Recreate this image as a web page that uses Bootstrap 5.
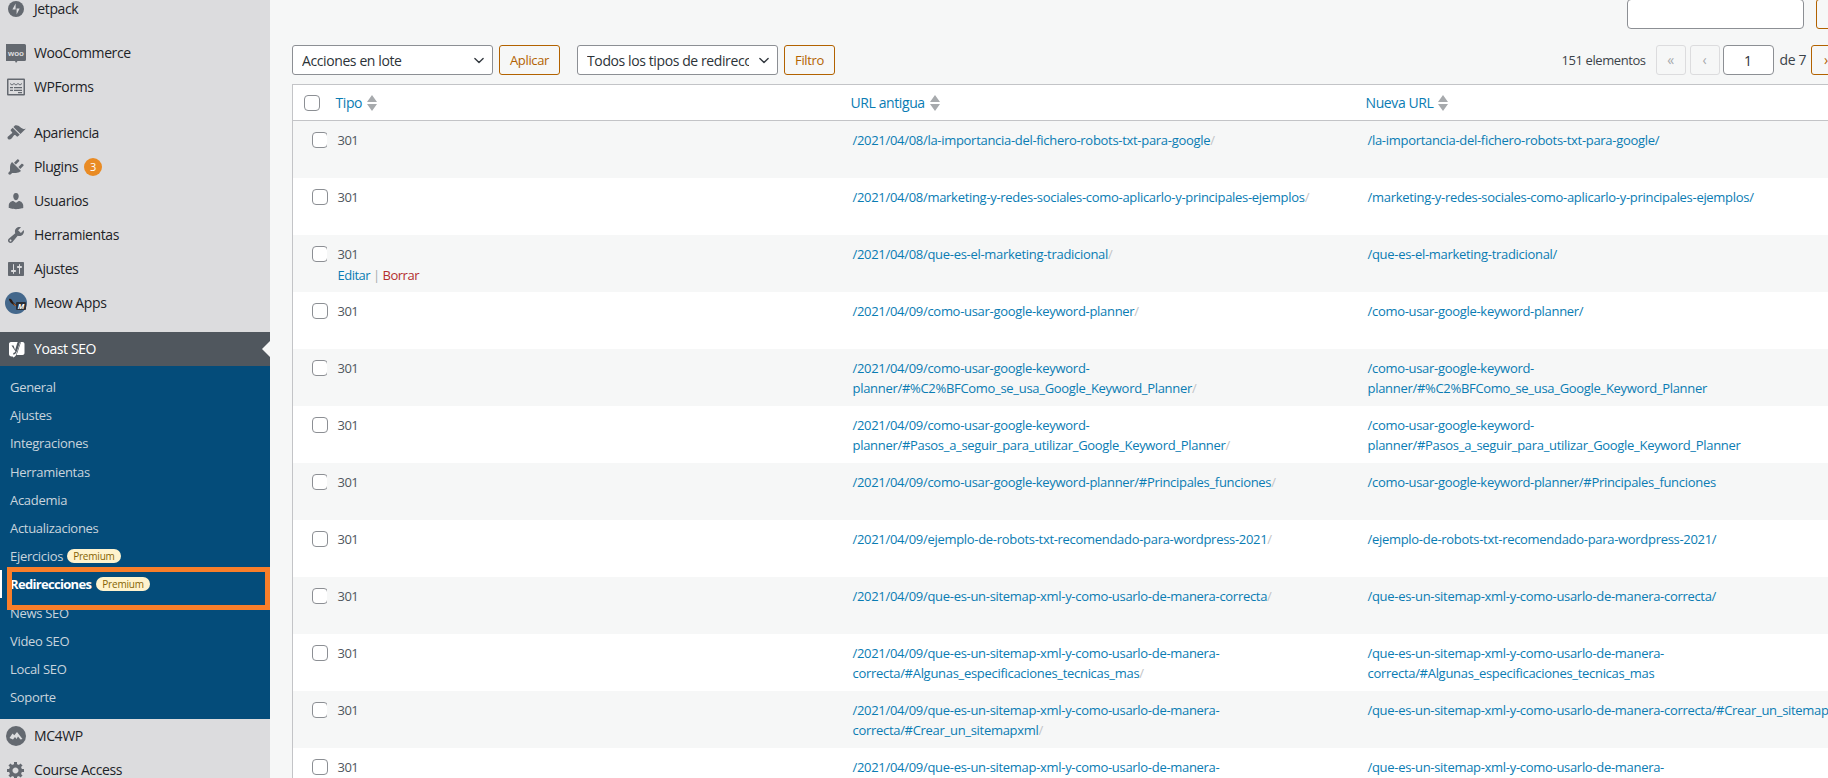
<!DOCTYPE html>
<html lang="es">
<head>
<meta charset="utf-8">
<title>Redirecciones</title>
<link href="https://cdn.jsdelivr.net/npm/bootstrap@5.3.0/dist/css/bootstrap.min.css" rel="stylesheet">
<style>
html,body{height:778px;overflow:hidden;background:#f6f7f7}
body{font-family:"Open Sans","Noto Sans",sans-serif;font-size:13px;letter-spacing:-.42px;color:#3c434a;line-height:20px}
.wp-shell{height:778px;overflow:hidden}
.wp-side{width:270px;flex:none;background:#dcdcde;height:778px;overflow:hidden;position:relative;font-size:14px;letter-spacing:-.4px}
.wp-list{margin:-8px 0 0}
.wp-item{height:34px;color:#1d2327;gap:8px;padding-left:6px}
.wp-ico{width:20px;height:20px;flex:none;fill:#646970}
.wp-ico-meow{width:22px;height:22px;margin:0 -1px}
.wp-sep{height:10px}
.wp-sep2{height:12px}
.wp-count{width:18px;height:18px;border-radius:50%;background:#e98b24;color:#fff;font-size:11px;letter-spacing:0;margin-left:-2px}
.wp-yoast{background:#50575e;color:#fff;position:relative}
.wp-yoast::after{content:"";position:absolute;right:0;top:9px;border:8px solid transparent;border-right-color:#f6f7f7;border-left:0}
.wp-sub{background:#044c7a;padding:7px 0 8px;color:#c9d4dd;font-size:13px;letter-spacing:-.3px}
.wp-sub>div{height:28.2px;padding-left:10px;gap:4px}
.wp-sub .wp-on{color:#fff;font-weight:700;letter-spacing:-.68px}
.wp-prem{background:#fff3cd;color:#856404;font-size:10px;font-weight:400;letter-spacing:-.2px;line-height:14px;border-radius:8px;padding:0 6px;margin-left:0}
.wp-on .wp-prem{margin-left:1px}
.wp-bar{position:absolute;left:0;top:570px;width:2px;height:28px;background:#fff}
.wp-mark{position:absolute;left:7px;top:567px;width:263px;height:43px;border:5px solid #f97e2a}
.wp-main{flex:none;width:1583px;margin-left:22px}
.wp-search{margin-top:-1px;height:30px;margin-bottom:16px;gap:12px}
.wp-input{width:177px;height:30px;border:1px solid #8c8f94;border-radius:4px;background:#fff}
.wp-btn.btn{height:30px;padding:0 10px;font-size:13px;letter-spacing:-.35px;line-height:28px;color:#b26200;border:1px solid #b26200;border-radius:3px;background:#f6f7f7;margin-left:6px}
.wp-search .wp-btn.btn{width:59px;margin-left:0}
.wp-nav{height:30px;margin-bottom:9px}
.wp-sel.form-select{width:201px;height:30px;padding:0 28px 0 9px;font-size:14px;letter-spacing:-.4px;color:#2c3338;border:1px solid #8c8f94;border-radius:3px;background-position:right 6px center;background-size:14px 11px;font-family:inherit}
.wp-sel2.form-select{margin-left:17px}
.wp-total{margin-right:10px}
.wp-of{margin-right:5px;font-size:14px}
.wp-page.btn{width:30px;height:30px;padding:0;font-size:14px;line-height:26px;color:#a7aaad;background:#f6f7f7;border:1px solid #dcdcde;border-radius:3px;opacity:1}
.wp-page-on.btn{color:#b26200;border-color:#b26200}
.wp-num.form-control{width:51px;height:30px;padding:0;text-align:center;font-size:14px;color:#2c3338;border:1px solid #8c8f94;border-radius:4px;margin:0 6px 0 3px;font-family:inherit}
.wp-table.table{table-layout:fixed;width:1583px;margin:0;border:1px solid #c3c4c7;border-bottom:0;background:#fff;font-size:13px}
.wp-col1{width:34px}.wp-col2,.wp-col3{width:515px}.wp-col4{width:519px}
.wp-table.table>:not(caption)>*>*{padding:8px 10px;background:transparent;color:#50575e;box-shadow:none;border:0;vertical-align:top;line-height:20px;white-space:nowrap;overflow:visible}
.wp-table.table>thead>tr>th{height:36px;padding:7px 9px;font-weight:400;font-size:14px;letter-spacing:-.4px;color:#0a7cb3;border-bottom:1px solid #c3c4c7;vertical-align:middle}
.wp-table.table>tbody>tr>td{height:57px;padding:9px 10px 8px 10px}
.wp-table.table>tbody>tr:nth-child(odd)>td{background:#f6f7f7}
.wp-table.table>thead>tr>th.wp-c{padding:0 0 0 11px}
.wp-table.table>tbody>tr>td.wp-c{padding:11px 0 0 19px}
.wp-table.table>tbody>tr>td.wp-t{padding-left:11px;letter-spacing:-.5px}
.wp-table.table>tbody>tr>td.wp-u{padding-left:11px;letter-spacing:-.3px}
.wp-table a{color:#0a7cb3;text-decoration:none}
.wp-table a.wp-del{color:#b32d2e}
.wp-table .wp-slash{color:#c3c4c7}
.wp-check.form-check-input{width:16px;height:16px;margin:0;border:1px solid #8c8f94;border-radius:4px;display:block;background-color:#fff}
.wp-sort{width:10px;height:16px;fill:#a7aaad;margin-left:5px;vertical-align:-3px}
.wp-act{color:#a7aaad;font-size:13px}
.wp-rowact{margin:1px 0 -1px}
</style>
</head>
<body>
<div class="wp-shell d-flex">
<aside class="wp-side">
  <div class="wp-list">
    <div class="wp-item d-flex align-items-center"><svg class="wp-ico" viewBox="0 0 20 20"><circle cx="10" cy="10" r="8"/><path fill="#dcdcde" d="M9.6 4.500v6H6.400zM10.600 15.500v-6h3.100z"/></svg>Jetpack</div>
    <div class="wp-sep"></div>
    <div class="wp-item d-flex align-items-center"><svg class="wp-ico" viewBox="0 0 20 20"><path d="M1.500 1h17a1.500 1.500 0 0 1 1.500 1.500v14a1.500 1.500 0 0 1-1.500 1.500h-7l-1.500 2-1-2h-8.500a1.500 1.500 0 0 1-1.500-1.500v-14a1.500 1.500 0 0 1 1.500-1.500z"/><text x="10" y="12.500" font-size="8" font-weight="700" fill="#dcdcde" text-anchor="middle" font-family="'Liberation Sans',sans-serif" letter-spacing="0">woo</text></svg>WooCommerce</div>
    <div class="wp-item d-flex align-items-center"><svg class="wp-ico" viewBox="0 0 20 20"><path fill-rule="evenodd" d="M2 1.500h16a1 1 0 0 1 1 1v15a1 1 0 0 1-1 1h-16a1 1 0 0 1-1-1v-15a1 1 0 0 1 1-1zM2.500 3v14h15v-14z"/><path d="M4 6l2 1.500 2-1.500 2 1.500 2-1.500 2 1.500 2-1.500v1l-2 1.500-2-1.500-2 1.500-2-1.500-2 1.500-2-1.500zM4 10h3v1.200h-3zM8 10h8v1.200h-8zM4 12.800h3v1.200h-3zM8 12.800h8v1.200h-8zM12 15h4v1.200h-4z"/></svg>WPForms</div>
    <div class="wp-sep2"></div>
    <div class="wp-item d-flex align-items-center"><svg class="wp-ico" viewBox="0 0 20 20"><path d="M14.480 11.060L7.410 3.990l1.500-1.500c.5-.56 2.300-.47 3.510.32 1.210.8 1.430 1.280 2.910 2.100 1.180.64 2.450 1.260 4.450.85zm-.71.71L6.700 4.700 4.930 6.470c-.39.39-.39 1.020 0 1.410l1.060 1.060c.39.39.39 1.030 0 1.420-.6.6-1.430 1.110-2.210 1.690-.35.26-.7.53-1.010.84C1.430 13.230 1 14.890 2.070 15.960c.97.97 2.390.67 3.500-.43.3-.31.57-.66.83-1.010.58-.78 1.100-1.610 1.700-2.210.39-.39 1.020-.39 1.410 0l1.060 1.060c.39.39 1.020.39 1.410 0z"/></svg>Apariencia</div>
    <div class="wp-item d-flex align-items-center"><svg class="wp-ico" viewBox="0 0 20 20"><path d="M13.110 4.360L9.870 7.600 8 5.730l3.240-3.240c.35-.34 1.050-.2 1.560.32.52.51.66 1.210.31 1.550zm-8 1.770l.91-1.120 9.010 9.010-1.190.84c-.71.71-2.630 1.160-3.820 1.160H6.140L4.900 17.260c-.59.59-1.540.59-2.120 0-.59-.58-.59-1.530 0-2.120l1.240-1.240v-3.880c0-1.130.4-3.190 1.090-3.890zm7.260 3.970l3.240-3.240c.34-.35 1.040-.21 1.550.31.52.51.66 1.210.31 1.550l-3.240 3.250z"/></svg><span>Plugins</span><span class="wp-count d-inline-flex align-items-center justify-content-center">3</span></div>
    <div class="wp-item d-flex align-items-center"><svg class="wp-ico" viewBox="0 0 20 20"><path d="M10 9.250c-2.270 0-2.730-3.440-2.730-3.440C7 4.020 7.820 2 9.970 2c2.160 0 2.980 2.020 2.710 3.810 0 0-.41 3.440-2.680 3.440zm0 2.570L12.720 10c2.390 0 4.520 2.330 4.520 4.530v2.490s-3.650 1.130-7.240 1.130c-3.650 0-7.240-1.130-7.240-1.130v-2.490c0-2.250 1.940-4.480 4.470-4.480z"/></svg>Usuarios</div>
    <div class="wp-item d-flex align-items-center"><svg class="wp-ico" viewBox="0 0 20 20"><path d="M16.680 9.770c-1.340 1.340-3.300 1.670-4.950.99l-5.410 6.520c-.99.99-2.590.99-3.580 0s-.99-2.590 0-3.570l6.520-5.420c-.68-1.650-.35-3.610.99-4.950 1.280-1.280 3.120-1.620 4.720-1.060l-2.890 2.890 2.820 2.820 2.860-2.870c.53 1.580.18 3.390-1.080 4.650zM3.810 16.210c.4.39 1.040.39 1.430 0 .4-.4.4-1.040 0-1.430-.39-.4-1.030-.4-1.430 0-.39.39-.39 1.030 0 1.430z"/></svg>Herramientas</div>
    <div class="wp-item d-flex align-items-center"><svg class="wp-ico" viewBox="0 0 20 20"><path d="M18 16V4c0-.55-.45-1-1-1H3c-.55 0-1 .45-1 1v12c0 .55.45 1 1 1h14c.55 0 1-.45 1-1zM8 11h1c.55 0 1 .45 1 1s-.45 1-1 1H8v1.500c0 .28-.22.5-.5.5s-.5-.22-.5-.5V13H6c-.55 0-1-.45-1-1s.45-1 1-1h1V5.500c0-.28.22-.5.5-.5s.5.22.5.5V11zm5-2h-1c-.55 0-1-.45-1-1s.45-1 1-1h1V5.500c0-.28.22-.5.5-.5s.5.22.5.5V7h1c.55 0 1 .45 1 1s-.45 1-1 1h-1v5.500c0 .28-.22.5-.5.5s-.5-.22-.5-.5V9z"/></svg>Ajustes</div>
    <div class="wp-item d-flex align-items-center"><svg class="wp-ico wp-ico-meow" viewBox="0 0 22 22"><circle cx="11" cy="11" r="11" fill="#44688c"/><path d="M4 7c2-1 3 1 4 3l3 3-1 1-4-3c-1-1-2-3-2-4z" fill="#2b1a12"/><path d="M8 11l3 2.500-1 .8z" fill="#d8742a"/><rect x="11" y="10" width="10" height="8" rx="1" fill="#2a2f36"/><text x="16" y="16.500" font-size="7.500" font-style="italic" font-weight="700" fill="#fff" text-anchor="middle" letter-spacing="0">M</text></svg>Meow Apps</div>
    <div class="wp-sep2"></div>
    <div class="wp-item wp-yoast d-flex align-items-center"><svg class="wp-ico" viewBox="0 0 20 20"><path fill="#fff" d="M3 3h11.500l-1.500 4-2.800 8.500c-.4 1.400-1.300 2.500-3 3l-.4-1h-1.300c-1.500 0-2.500-1-2.500-2.500v-10c0-1 .5-2 2-2z"/><path fill="#fff" d="M15 3h1.500c1.200 0 2 .8 2 2v9c0 1.300-.8 2-2 2h-6l1-2.500z"/><path fill="#50575e" d="M5.500 6.500h2l1.600 4.500 2-6.500 1-2.500h2.300l-3.400 10c-.7 2-1.700 3.300-3.700 3.700v-1.700c1-.2 1.800-.8 2.100-1.800z"/></svg>Yoast SEO</div>
    <div class="wp-sub">
      <div class="d-flex align-items-center">General</div>
      <div class="d-flex align-items-center">Ajustes</div>
      <div class="d-flex align-items-center">Integraciones</div>
      <div class="d-flex align-items-center">Herramientas</div>
      <div class="d-flex align-items-center">Academia</div>
      <div class="d-flex align-items-center">Actualizaciones</div>
      <div class="d-flex align-items-center">Ejercicios <span class="wp-prem">Premium</span></div>
      <div class="d-flex align-items-center wp-on">Redirecciones <span class="wp-prem">Premium</span></div>
      <div class="d-flex align-items-center">News SEO</div>
      <div class="d-flex align-items-center">Video SEO</div>
      <div class="d-flex align-items-center">Local SEO</div>
      <div class="d-flex align-items-center">Soporte</div>
    </div>
    <div class="wp-item d-flex align-items-center"><svg class="wp-ico" viewBox="0 0 20 20"><circle cx="10" cy="10" r="10"/><path fill="#dcdcde" d="M3.500 12l3-4.500 1.800 1.800L11 6l5.500 7-2 .5-2.500-3-1.500 2.500-1.500-2-2 2.500z"/></svg>MC4WP</div>
    <div class="wp-item d-flex align-items-center"><svg class="wp-ico" viewBox="0 0 20 20"><path d="M18 12h-2.180c-.17.7-.44 1.350-.81 1.930l1.540 1.540-2.100 2.100-1.540-1.540c-.58.36-1.230.63-1.910.79V19H8v-2.180c-.68-.16-1.330-.43-1.910-.79l-1.540 1.540-2.120-2.120 1.540-1.540c-.36-.58-.63-1.230-.79-1.910H1V9.030h2.170c.16-.7.44-1.350.8-1.940L2.430 5.550l2.100-2.100 1.540 1.540c.58-.37 1.240-.64 1.930-.81V2h3v2.180c.68.16 1.330.43 1.910.79l1.540-1.540 2.120 2.120-1.540 1.540c.36.59.64 1.240.8 1.940H18V12zm-8.500 1.500c1.660 0 3-1.340 3-3s-1.340-3-3-3-3 1.340-3 3 1.340 3 3 3z"/></svg>Course Access</div>
  </div>
  <div class="wp-bar"></div>
  <div class="wp-mark"></div>
</aside>
<main class="wp-main">
  <div class="wp-search d-flex justify-content-end">
    <div class="wp-input"></div>
    <button class="btn wp-btn" type="button"></button>
  </div>
  <div class="wp-nav d-flex justify-content-between align-items-center">
    <div class="d-flex align-items-center">
      <select class="form-select wp-sel"><option>Acciones en lote</option></select>
      <button class="btn wp-btn" type="button">Aplicar</button>
      <select class="form-select wp-sel wp-sel2"><option>Todos los tipos de redirección</option></select>
      <button class="btn wp-btn" type="button">Filtro</button>
    </div>
    <div class="d-flex align-items-center">
      <span class="wp-total">151 elementos</span>
      <button class="btn wp-page me-1" disabled type="button">«</button>
      <button class="btn wp-page" disabled type="button">‹</button>
      <input class="form-control wp-num" value="1" aria-label="Página">
      <span class="wp-of">de 7</span>
      <button class="btn wp-page wp-page-on me-1" type="button">›</button>
      <button class="btn wp-page wp-page-on" type="button">»</button>
    </div>
  </div>
  <table class="table wp-table">
    <colgroup><col class="wp-col1"><col class="wp-col2"><col class="wp-col3"><col class="wp-col4"></colgroup>
    <thead><tr>
      <th class="wp-c"><input class="form-check-input wp-check" type="checkbox" aria-label="Todos"></th>
      <th>Tipo<svg class="wp-sort" viewBox="0 0 10 16"><path d="M5 0l5 7H0zM5 16L0 9h10z"/></svg></th>
      <th>URL antigua<svg class="wp-sort" viewBox="0 0 10 16"><path d="M5 0l5 7H0zM5 16L0 9h10z"/></svg></th>
      <th>Nueva URL<svg class="wp-sort" viewBox="0 0 10 16"><path d="M5 0l5 7H0zM5 16L0 9h10z"/></svg></th>
    </tr></thead>
    <tbody>
      <tr><td class="wp-c"><input class="form-check-input wp-check" type="checkbox" aria-label="Fila"></td><td class="wp-t">301</td><td class="wp-u"><a href="#">/2021/04/08/la-importancia-del-fichero-robots-txt-para-google<span class="wp-slash">/</span></a></td><td class="wp-u"><a href="#">/la-importancia-del-fichero-robots-txt-para-google/</a></td></tr>
      <tr><td class="wp-c"><input class="form-check-input wp-check" type="checkbox" aria-label="Fila"></td><td class="wp-t">301</td><td class="wp-u"><a href="#">/2021/04/08/marketing-y-redes-sociales-como-aplicarlo-y-principales-ejemplos<span class="wp-slash">/</span></a></td><td class="wp-u"><a href="#">/marketing-y-redes-sociales-como-aplicarlo-y-principales-ejemplos/</a></td></tr>
      <tr><td class="wp-c"><input class="form-check-input wp-check" type="checkbox" aria-label="Fila"></td><td class="wp-t">301<div class="wp-rowact"><a href="#">Editar</a> <span class="wp-act">|</span> <a class="wp-del" href="#">Borrar</a></div></td><td class="wp-u"><a href="#">/2021/04/08/que-es-el-marketing-tradicional<span class="wp-slash">/</span></a></td><td class="wp-u"><a href="#">/que-es-el-marketing-tradicional/</a></td></tr>
      <tr><td class="wp-c"><input class="form-check-input wp-check" type="checkbox" aria-label="Fila"></td><td class="wp-t">301</td><td class="wp-u"><a href="#">/2021/04/09/como-usar-google-keyword-planner<span class="wp-slash">/</span></a></td><td class="wp-u"><a href="#">/como-usar-google-keyword-planner/</a></td></tr>
      <tr><td class="wp-c"><input class="form-check-input wp-check" type="checkbox" aria-label="Fila"></td><td class="wp-t">301</td><td class="wp-u"><a href="#">/2021/04/09/como-usar-google-keyword-<br>planner/#%C2%BFComo_se_usa_Google_Keyword_Planner<span class="wp-slash">/</span></a></td><td class="wp-u"><a href="#">/como-usar-google-keyword-<br>planner/#%C2%BFComo_se_usa_Google_Keyword_Planner</a></td></tr>
      <tr><td class="wp-c"><input class="form-check-input wp-check" type="checkbox" aria-label="Fila"></td><td class="wp-t">301</td><td class="wp-u"><a href="#">/2021/04/09/como-usar-google-keyword-<br>planner/#Pasos_a_seguir_para_utilizar_Google_Keyword_Planner<span class="wp-slash">/</span></a></td><td class="wp-u"><a href="#">/como-usar-google-keyword-<br>planner/#Pasos_a_seguir_para_utilizar_Google_Keyword_Planner</a></td></tr>
      <tr><td class="wp-c"><input class="form-check-input wp-check" type="checkbox" aria-label="Fila"></td><td class="wp-t">301</td><td class="wp-u"><a href="#">/2021/04/09/como-usar-google-keyword-planner/#Principales_funciones<span class="wp-slash">/</span></a></td><td class="wp-u"><a href="#">/como-usar-google-keyword-planner/#Principales_funciones</a></td></tr>
      <tr><td class="wp-c"><input class="form-check-input wp-check" type="checkbox" aria-label="Fila"></td><td class="wp-t">301</td><td class="wp-u"><a href="#">/2021/04/09/ejemplo-de-robots-txt-recomendado-para-wordpress-2021<span class="wp-slash">/</span></a></td><td class="wp-u"><a href="#">/ejemplo-de-robots-txt-recomendado-para-wordpress-2021/</a></td></tr>
      <tr><td class="wp-c"><input class="form-check-input wp-check" type="checkbox" aria-label="Fila"></td><td class="wp-t">301</td><td class="wp-u"><a href="#">/2021/04/09/que-es-un-sitemap-xml-y-como-usarlo-de-manera-correcta<span class="wp-slash">/</span></a></td><td class="wp-u"><a href="#">/que-es-un-sitemap-xml-y-como-usarlo-de-manera-correcta/</a></td></tr>
      <tr><td class="wp-c"><input class="form-check-input wp-check" type="checkbox" aria-label="Fila"></td><td class="wp-t">301</td><td class="wp-u"><a href="#">/2021/04/09/que-es-un-sitemap-xml-y-como-usarlo-de-manera-<br>correcta/#Algunas_especificaciones_tecnicas_mas<span class="wp-slash">/</span></a></td><td class="wp-u"><a href="#">/que-es-un-sitemap-xml-y-como-usarlo-de-manera-<br>correcta/#Algunas_especificaciones_tecnicas_mas</a></td></tr>
      <tr><td class="wp-c"><input class="form-check-input wp-check" type="checkbox" aria-label="Fila"></td><td class="wp-t">301</td><td class="wp-u"><a href="#">/2021/04/09/que-es-un-sitemap-xml-y-como-usarlo-de-manera-<br>correcta/#Crear_un_sitemapxml<span class="wp-slash">/</span></a></td><td class="wp-u"><a href="#">/que-es-un-sitemap-xml-y-como-usarlo-de-manera-correcta/#Crear_un_sitemapxml</a></td></tr>
      <tr><td class="wp-c"><input class="form-check-input wp-check" type="checkbox" aria-label="Fila"></td><td class="wp-t">301</td><td class="wp-u"><a href="#">/2021/04/09/que-es-un-sitemap-xml-y-como-usarlo-de-manera-<br>correcta/#Ejemplo<span class="wp-slash">/</span></a></td><td class="wp-u"><a href="#">/que-es-un-sitemap-xml-y-como-usarlo-de-manera-<br>correcta/#Ejemplo</a></td></tr>
    </tbody>
  </table>
</main>
</div>
<script src="https://cdn.jsdelivr.net/npm/bootstrap@5.3.0/dist/js/bootstrap.bundle.min.js"></script>
</body>
</html>
